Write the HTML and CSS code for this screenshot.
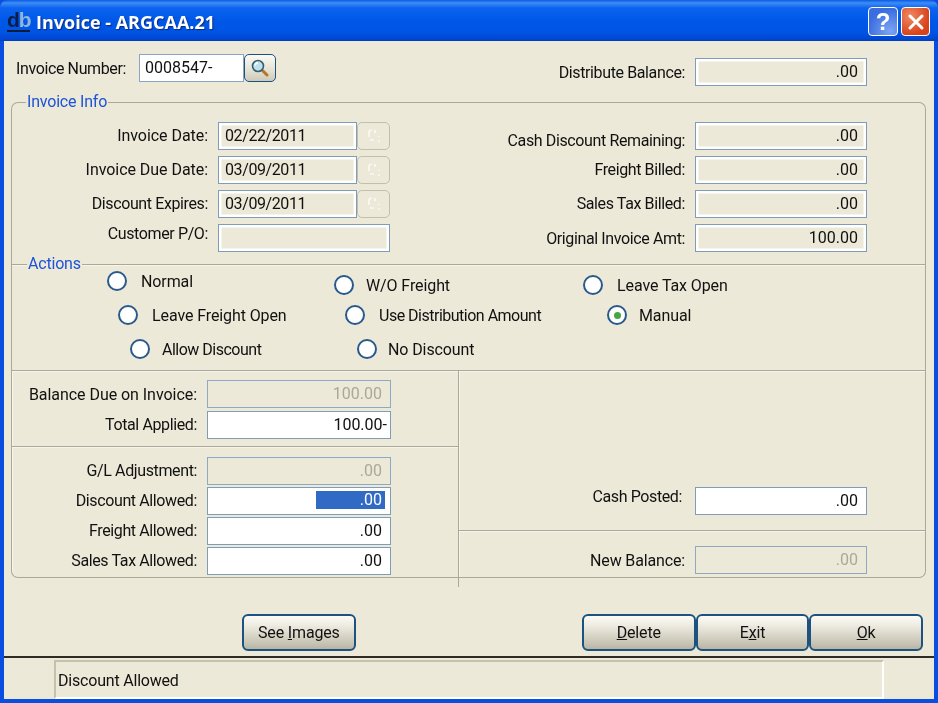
FILE: index.html
```html
<!DOCTYPE html>
<html lang="en">
<head>
<meta charset="utf-8">
<title>Invoice - ARGCAA.21</title>
<link rel="stylesheet" href="styles.css">
</head>
<body>
<div class="window">
  <header class="titlebar">
    <span class="logo">d<span class="logo-b">b</span></span>
    <h1 class="title">Invoice - ARGCAA.21</h1>
    <div class="caption-buttons">
      <button class="cap cap-help">?</button>
      <button class="cap cap-close"><svg width="18" height="18" viewBox="0 0 18 18"><path d="M3 3 L15 15 M15 3 L3 15" stroke="#fff" stroke-width="3" stroke-linecap="round"/></svg></button>
    </div>
  </header>
  <main class="client">
    <section class="top-row">
      <span class="lbl lbl-inv">Invoice Number:</span>
      <div class="field field-white field-inv">0008547-</div>
      <button class="lookup"><svg width="20" height="20" viewBox="0 0 20 20"><path d="M11.5 11.5 L17 17" stroke="#b5752e" stroke-width="3" stroke-linecap="round"/><circle cx="8" cy="8" r="5.5" fill="#bfe0ee" stroke="#33606f" stroke-width="1.6"/><path d="M5 7.5 A3.4 3.4 0 0 1 8 4.8" stroke="#fff" stroke-width="1.4" fill="none"/></svg></button>
      <span class="lbl lbl-dist">Distribute Balance:</span>
      <div class="field field-ro num field-dist">.00</div>
    </section>

    <section class="group group-info">
      <span class="legend legend-info">Invoice Info</span>
      <div class="info-col">
        <div class="row"><span class="lbl lbl-left lbl-wide">Invoice Date:</span><div class="field field-ro field-date">02/22/2011</div><button class="cal"><svg width="22" height="20" viewBox="0 0 22 20"><path d="M6 11 V6 Q6 4 9 4 M12 4 V7 M7 14 H11 M15 15 H17 M16 10 V11" stroke="#fff" stroke-width="1.2" fill="none"/></svg></button></div>
        <div class="row"><span class="lbl lbl-left lbl-wide">Invoice Due Date:</span><div class="field field-ro field-date">03/09/2011</div><button class="cal"><svg width="22" height="20" viewBox="0 0 22 20"><path d="M6 11 V6 Q6 4 9 4 M12 4 V7 M7 14 H11 M15 15 H17 M16 10 V11" stroke="#fff" stroke-width="1.2" fill="none"/></svg></button></div>
        <div class="row"><span class="lbl lbl-left">Discount Expires:</span><div class="field field-ro field-date">03/09/2011</div><button class="cal"><svg width="22" height="20" viewBox="0 0 22 20"><path d="M6 11 V6 Q6 4 9 4 M12 4 V7 M7 14 H11 M15 15 H17 M16 10 V11" stroke="#fff" stroke-width="1.2" fill="none"/></svg></button></div>
        <div class="row"><span class="lbl lbl-left lbl-up">Customer P/O:</span><div class="field field-ro field-po"></div></div>
      </div>
      <div class="info-col info-right">
        <div class="row"><span class="lbl lbl-down">Cash Discount Remaining:</span><div class="field field-ro num field-amt">.00</div></div>
        <div class="row"><span class="lbl">Freight Billed:</span><div class="field field-ro num field-amt">.00</div></div>
        <div class="row"><span class="lbl">Sales Tax Billed:</span><div class="field field-ro num field-amt">.00</div></div>
        <div class="row"><span class="lbl lbl-flat">Original Invoice Amt:</span><div class="field field-ro num field-amt">100.00</div></div>
      </div>
    </section>

    <section class="group group-actions">
      <span class="legend">Actions</span>
      <div class="radio-row radio-row-1">
        <label class="opt opt-a opt-raised"><span class="radio"></span>Normal</label>
        <label class="opt opt-b"><span class="radio radio-near"></span>W/O Freight</label>
        <label class="opt"><span class="radio"></span>Leave Tax Open</label>
      </div>
      <div class="radio-row radio-row-2">
        <label class="opt opt-a"><span class="radio"></span>Leave Freight Open</label>
        <label class="opt opt-c opt-tight"><span class="radio"></span>Use Distribution Amount</label>
        <label class="opt"><span class="radio radio-on radio-near"></span>Manual</label>
      </div>
      <div class="radio-row radio-row-3">
        <label class="opt opt-a opt-tight"><span class="radio radio-near"></span>Allow Discount</label>
        <label class="opt"><span class="radio radio-nearer"></span>No Discount</label>
      </div>
    </section>

    <section class="totals">
      <div class="totals-left">
        <div class="panel panel-balance">
          <div class="row row-tot"><span class="lbl lbl-tot lbl-flat lbl-wide">Balance Due on Invoice:</span><div class="field field-dis num field-tot">100.00</div></div>
          <div class="row row-tot"><span class="lbl lbl-tot">Total Applied:</span><div class="field field-white num field-tot field-neg">100.00-</div></div>
        </div>
        <div class="panel panel-adjust">
          <div class="row row-tot"><span class="lbl lbl-tot">G/L Adjustment:</span><div class="field field-dis num field-tot">.00</div></div>
          <div class="row row-tot"><span class="lbl lbl-tot">Discount Allowed:</span><div class="field field-white num field-tot"><span class="selected">.00</span></div></div>
          <div class="row row-tot"><span class="lbl lbl-tot">Freight Allowed:</span><div class="field field-white num field-tot">.00</div></div>
          <div class="row row-tot"><span class="lbl lbl-tot">Sales Tax Allowed:</span><div class="field field-white num field-tot">.00</div></div>
        </div>
      </div>
      <div class="totals-right">
        <div class="panel-cash">
          <div class="row"><span class="lbl lbl-cash">Cash Posted:</span><div class="field field-white num field-amt">.00</div></div>
        </div>
        <div class="panel-new">
          <div class="row"><span class="lbl lbl-flat">New Balance:</span><div class="field field-dis num field-amt">.00</div></div>
        </div>
      </div>
    </section>

    <section class="actions-bar">
      <button class="btn btn-images">See <u>I</u>mages</button>
      <div class="btn-group">
        <button class="btn"><u>D</u>elete</button>
        <button class="btn">E<u>x</u>it</button>
        <button class="btn"><u>O</u>k</button>
      </div>
    </section>

    <footer class="statusbar">
      <div class="status-text">Discount Allowed</div>
    </footer>
  </main>
</div>
</body>
</html>
```
FILE: styles.css
```css
* { box-sizing: border-box; }
html, body { margin: 0; height: 100%; overflow: hidden; background: #0a4ee0; }
body { font-family: Roboto, "Liberation Sans", Arial, sans-serif; font-size: 16px; color: #111; }
button { font-family: inherit; font-size: 16px; color: #111; padding: 0; margin: 0; }

.window { width: 938px; height: 703px; display: flex; flex-direction: column; border-radius: 8px 8px 0 0; background: #0a4ee0; overflow: hidden; filter: blur(.35px); }

.titlebar { height: 41px; flex: none; display: flex; align-items: center; padding: 0 8px 0 7px;
  background: linear-gradient(#0a5be6 0, #3d8df5 3px, #0c63ee 8px, #0058e8 20px, #0054e4 32px, #0047d2 39px, #003cb8 41px); }
.logo { width: 23px; height: 21px; margin-top: 1px; font: 700 21px/17px "Liberation Sans", sans-serif; letter-spacing: -1px; color: #0c1e44; border-bottom: 2px solid #101b35; text-align: center; }
.logo-b { color: #8fb6dd; }
.title { margin: 3px 0 0 6px; font: 700 18px/1 "Open Sans", sans-serif; color: #fff; text-shadow: 1px 1px 1px #0a2a80; }
.caption-buttons { margin-left: auto; display: flex; gap: 3px; margin-top: 2px; }
.cap { width: 29px; height: 29px; border: 1.5px solid #fff; border-radius: 4px; display: flex; align-items: center; justify-content: center; }
.cap-help { width: 30px; background: radial-gradient(circle at 75% 85%, #7da4f4, #3a6ee0 70%); color: #fff; font: 700 24px/1 "Liberation Sans", sans-serif; }
.cap-close { background: radial-gradient(circle at 30% 30%, #ee8a62, #d9431c 70%); }

.client { flex: 1; margin: 0 4px 4px; background: #ece9d8; display: flex; flex-direction: column; position: relative; }

.lbl { white-space: nowrap; letter-spacing: -.38px; }
.lbl-wide { letter-spacing: -.05px; }
.row .lbl { padding-bottom: 2px; }
.row .lbl-flat { padding-bottom: 0; }
.field { height: 28px; line-height: 25px; padding: 0 8px; white-space: nowrap; border: 1.5px solid #7f9db9; }
.num { text-align: right; }
.field-white { background: #fff; }
.field-neg { padding-right: 3px; }
.field-ro { background: #ece9d8; box-shadow: inset 0 0 0 2.5px #fff; padding-left: 6px; }
.field-dis { background: #ece9d8; color: #aca899; border-color: #8ea9c3; }

.top-row { height: 61px; flex: none; display: flex; align-items: flex-start; padding: 13px 67px 0 12px; }
.lbl-inv { line-height: 29px; width: 123px; }
.field-inv { width: 105px; height: 28px; border-color: #8aa6c4; padding-left: 5px; }
.lookup { width: 32px; height: 28px; border: 1.5px solid #1c5180; border-radius: 5px; background: linear-gradient(#fbfaf4, #e4e1d2 60%, #cdcabb); display: flex; align-items: center; justify-content: center; }
.lbl-dist { margin-left: auto; margin-top: 5px; line-height: 28px; margin-right: 10px; }
.field-dist { width: 172px; margin-top: 4px; }

.group { position: relative; margin: 0 8px 0 7px; flex: none; border-left: 1px solid #aca899; border-right: 1px solid #aca899; border-top: 1px solid #aca899; box-shadow: inset 0 1px 0 #f6f5ec; }
.legend { position: absolute; top: -10px; left: 15px; background: #ece9d8; padding: 0 1px; color: #1c53d8; line-height: 18px; letter-spacing: -.2px; }
.legend-info { left: 14px; }

.group-info { height: 162px; padding: 19px 58px 0 0; display: flex; justify-content: space-between; border-radius: 7px 7px 0 0; box-shadow: none; }
.info-col { display: flex; flex-direction: column; gap: 6px; }
.info-right { align-items: flex-end; }
.row { display: flex; align-items: center; height: 28px; }
.lbl-left { width: 196px; text-align: right; margin-right: 10px; }
.info-right .lbl { margin-right: 10px; }
.lbl-up { margin-top: -8px; }
.lbl-down { margin-top: 10px; }
.field-date { width: 139px; letter-spacing: -.4px; }
.field-po { width: 172px; }
.field-amt { width: 172px; }
.cal { width: 33px; height: 28px; border: 1.5px solid #c2bfad; border-radius: 5px; background: #ece9d8; display: flex; align-items: center; justify-content: center; }

.group-actions { height: 106px; padding-top: 10px; }
.radio-row { display: flex; height: 20px; }
.radio-row-1 { padding-left: 95px; }
.radio-row-2 { padding-left: 106px; margin-top: 10px; }
.radio-row-3 { padding-left: 118px; margin-top: 14px; }
.opt { display: flex; align-items: center; white-space: nowrap; padding-top: 1px; letter-spacing: -.1px; }
.opt-a { width: 227px; }
.opt-b { width: 249px; }
.opt-c { width: 262px; }
.opt-tight { letter-spacing: -.5px; }
.opt-raised { margin-top: -4px; height: 20px; }
.radio { width: 20px; height: 20px; flex: none; border-radius: 50%; margin: -1px 14px 0 0; border: 2px solid #2a5a8c; background: #fff; position: relative; }
.radio-near { margin-right: 12px; }
.radio-nearer { margin-right: 11px; }
.radio-on::after { content: ""; position: absolute; left: 4.5px; top: 4.5px; width: 7px; height: 7px; border-radius: 50%; background: #43a843; }

.totals { height: 217px; flex: none; margin: 0 8px 0 7px; display: flex; }
.totals-left { width: 448px; height: 217px; border-right: 1px solid #aca899; flex: none; }
.panel { border-left: 1px solid #aca899; border-top: 1px solid #aca899; box-shadow: inset 1px 1px 0 #f6f5ec; }
.panel-balance { height: 76px; padding-top: 9px; display: flex; flex-direction: column; gap: 3px; }
.panel-adjust { height: 132px; padding-top: 10px; display: flex; flex-direction: column; gap: 2px; border-bottom: 1px solid #aca899; border-radius: 0 0 0 7px; }
.lbl-tot { width: 185px; text-align: right; margin-right: 10px; }
.field-tot { width: 184px; }
.selected { display: inline-block; width: 69px; height: 18px; line-height: 18px; margin-right: -3px; padding-right: 3px; background: #316ac5; color: #fff; text-align: right; vertical-align: 1px; }
.totals-right { flex: 1; height: 208px; display: flex; flex-direction: column; border-right: 1px solid #aca899; border-top: 1px solid #aca899; border-bottom: 1px solid #aca899; border-radius: 0 0 7px 0; padding-right: 58px; box-shadow: inset 1px 1px 0 #f6f5ec; }
.panel-cash { height: 160px; margin-right: -58px; padding: 116px 58px 0 0; border-bottom: 1px solid #aca899; box-shadow: 0 1px 0 #f6f5ec; }
.panel-cash .row, .panel-new .row { justify-content: flex-end; }
.panel-cash .lbl { margin-right: 13px; margin-top: -8px; }
.panel-new { padding-top: 15px; }
.panel-new .lbl { margin-right: 10px; letter-spacing: -.15px; }

.actions-bar { height: 37px; flex: none; margin: 27px 11px 5px 238px; display: flex; justify-content: space-between; }
.btn { width: 113.7px; height: 37px; border: 2px solid #1c5180; border-radius: 6px; background: linear-gradient(#fbfaf6, #f0eee4 25%, #c9c6b6 80%, #b8b5a5); text-align: center; letter-spacing: -.15px; }
.btn-group { display: flex; }

.statusbar { flex: 1; border-top: 2px solid #2f2c25; padding: 2px 50px 0 50px; }
.status-text { height: 100%; padding: 9px 2px 0; border-left: 2px solid #c4c1af; border-top: 2px solid #c4c1af; border-right: 2px solid #fff; border-bottom: 2px solid #fff; line-height: 20px; letter-spacing: -.2px; }
```
